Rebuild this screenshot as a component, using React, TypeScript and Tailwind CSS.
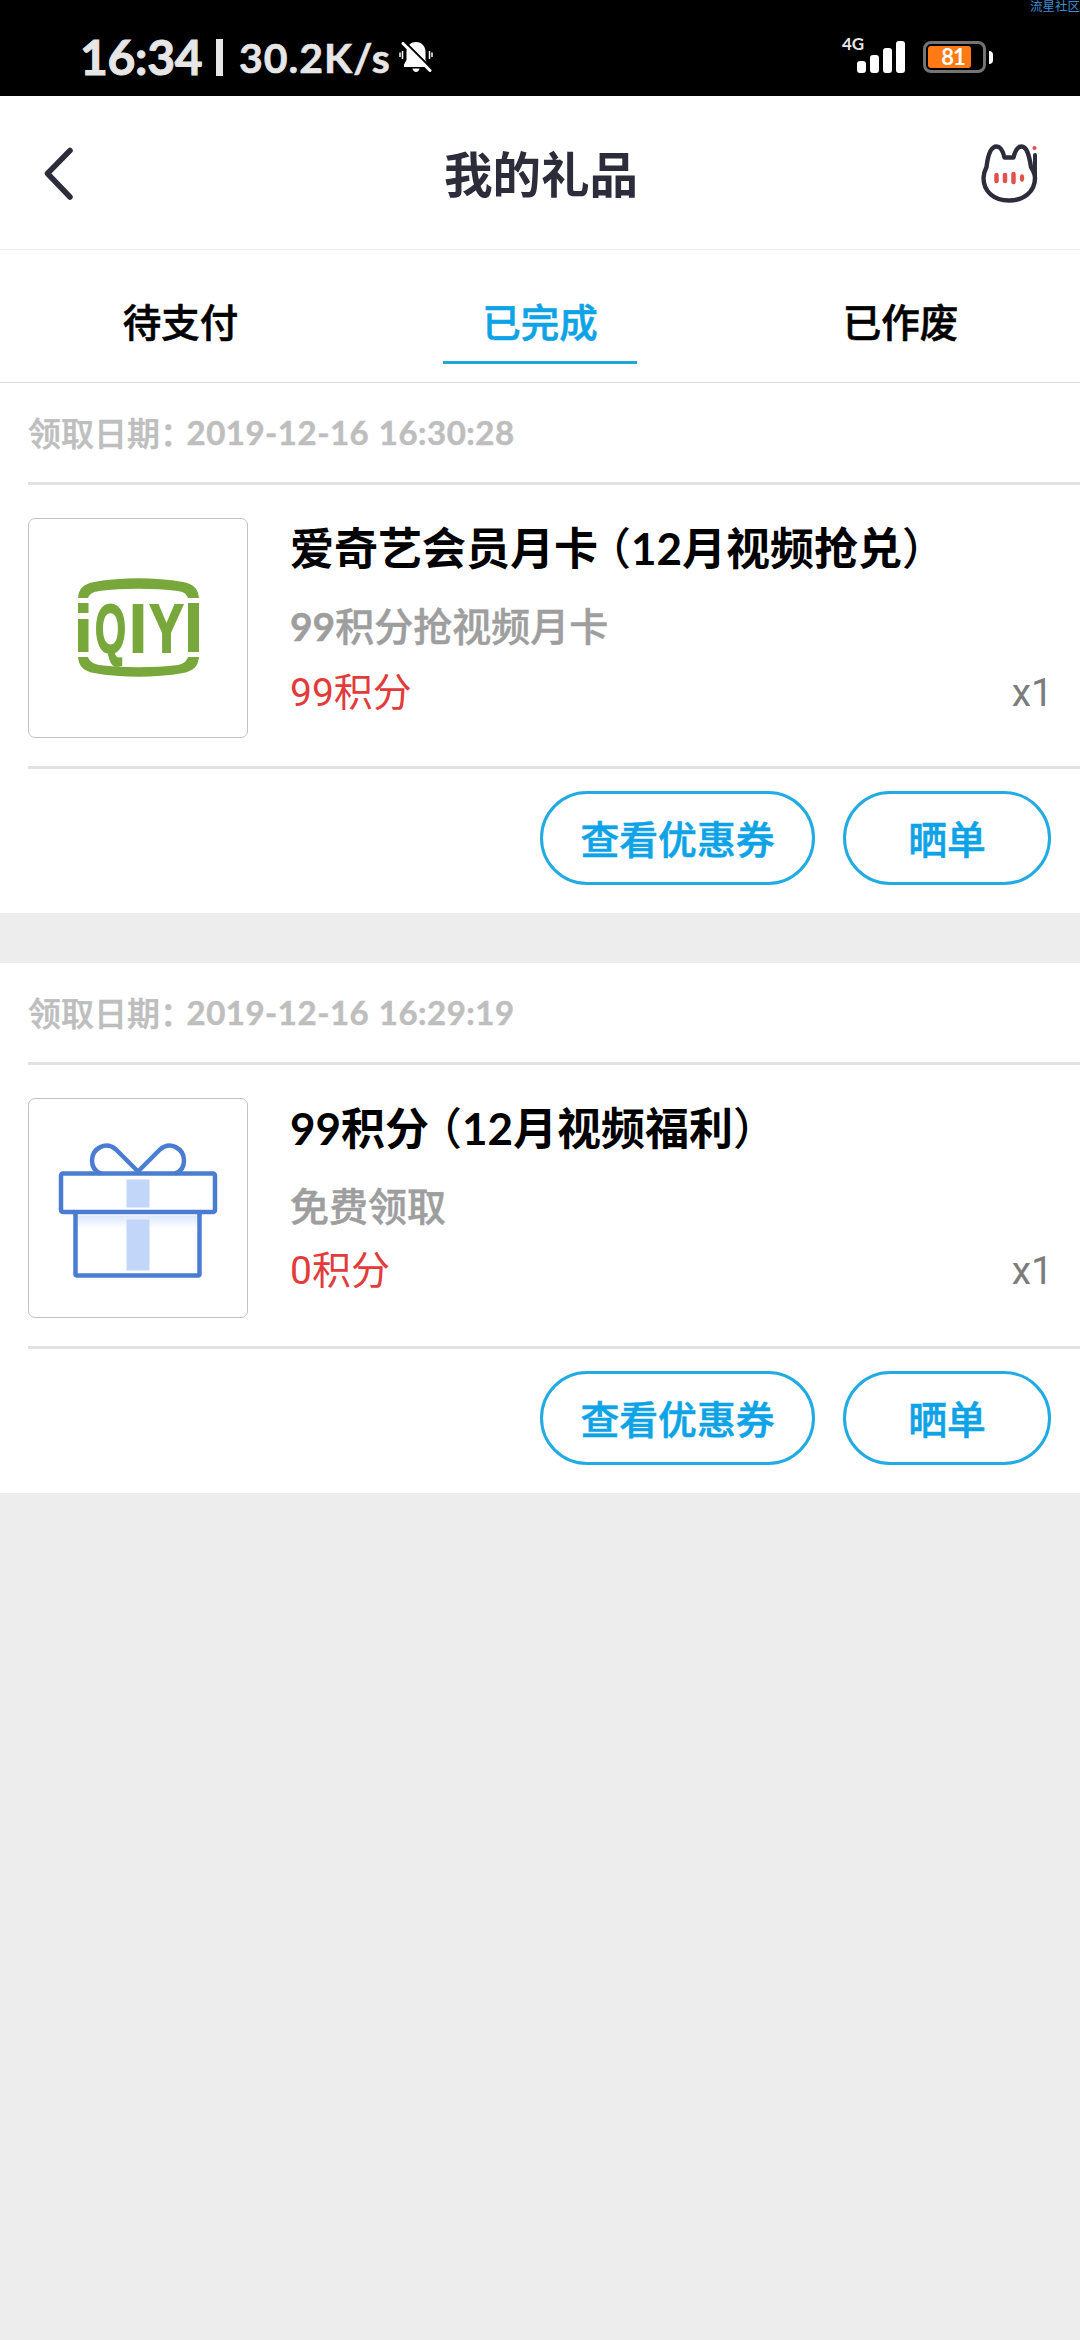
import type { ReactNode } from "react";

interface Gift {
  date: string;
  image: ReactNode;
  title: ReactNode;
  subtitle: ReactNode;
  points: string;
  count: number;
}

function MutedBell() {
  return (
    <svg viewBox="0 0 34 30" className="ml-[9px] h-[30px] w-[34px]">
      <path
        d="M17 0C11 0 7.500 4.500 7.500 10V18L5 22.500V25H28.500V22.500L26.500 18V10C26.500 4.500 23 0 17 0Z"
        fill="#fff"
      />
      <path d="M13.500 26.500H20.500C20 31 14 31 13.500 26.500Z" fill="#fff" />
      <path d="M1 10.500V15M3.500 9V17M30.500 9V17M33 10.500V15" stroke="#fff" strokeWidth="1.500" />
      <path d="M5 -1L33 27" stroke="#000" strokeWidth="2" />
      <path d="M4 1.500L31 28.500" stroke="#fff" strokeWidth="3" strokeLinecap="round" />
    </svg>
  );
}

function StatusBar() {
  return (
    <div className="relative flex h-24 items-start bg-black font-['Lato','Noto_Sans_CJK_SC',sans-serif] font-bold text-[#e6e6e6]">
      <div className="mt-[40px] flex h-[34px] items-center pl-[80px]">
        <span className="w-[122px] text-[48px] leading-none tracking-[-0.3px] [-webkit-text-stroke:1px]">16:34</span>
        <span className="ml-[14px] h-[37px] w-[7px] bg-[#e6e6e6]" />
        <span className="ml-4 w-[151px] text-[41px] leading-none tracking-[1px] whitespace-nowrap [-webkit-text-stroke:0.6px]">
          30.2K/s
        </span>
        <MutedBell />
      </div>
      <span className="mt-[35px] ml-auto w-[24px] text-[17px] leading-[18px]">4G</span>
      <div className="mt-[41px] -ml-[9px] flex h-8 items-end gap-[4px]">
        <i className="h-[12px] w-[9px] rounded-[3px] bg-white" />
        <i className="h-[18px] w-[9px] rounded-[3px] bg-white" />
        <i className="h-[25px] w-[9px] rounded-[3px] bg-white" />
        <i className="h-[32px] w-[9px] rounded-[3px] bg-white" />
      </div>
      <div className="mt-[41px] mr-[87px] ml-[18px] flex items-center gap-[3px]">
        <div className="h-8 w-[63px] rounded-[8px] border-[3px] border-[#747474] p-[2px]">
          <div className="flex h-[22px] w-[43px] items-center justify-center rounded-[3px] bg-[#ff7a14] pl-[7px] text-[22px] leading-none tracking-[-1px] text-white">
            81
          </div>
        </div>
        <i className="h-[13px] w-[4px] rounded-r-full bg-white" />
      </div>
      <span className="absolute top-0 right-0 text-[12.5px] leading-[14px] font-normal text-[#3b8fd2]">
        流星社区
      </span>
    </div>
  );
}

function CatIcon() {
  return (
    <svg viewBox="0 0 60 62" className="h-[62px] w-[60px]" fill="none">
      <path
        d="M7.500 25C9 12 12 4.500 17.500 4.500C22 4.500 24 9 25.500 15.500H34.500C36 9 38.500 4.500 42.500 4.500C47.500 4.500 50 12 52 25C54.500 29 56 32 56 36C56 49.500 45 58.500 30 58.500C15 58.500 4.500 49.500 4.500 36C4.500 32 5.500 29 7.500 25Z"
        stroke="#2c2c3a"
        strokeWidth="4.400"
        strokeLinejoin="round"
      />
      <path d="M56 13V36" stroke="#2c2c3a" strokeWidth="4" strokeLinecap="round" />
      <circle cx="55.500" cy="6" r="2.100" fill="#e0524c" />
      <path d="M17.500 33V39M26 33V39M34.500 32V40" stroke="#e0524c" strokeWidth="4.500" strokeLinecap="round" />
      <ellipse cx="43" cy="36" rx="2.200" ry="3.800" fill="#e0524c" />
    </svg>
  );
}

function Header() {
  return (
    <header className="flex h-[154px] items-center justify-between border-b border-[#eeeeee] bg-white pr-[41px] pl-[43px]">
      <svg viewBox="0 0 32 54" className="h-[54px] w-[60px]" preserveAspectRatio="xMinYMid meet" fill="none">
        <path d="M27 4.500L4.500 27.500L27 51" stroke="#2c2c3a" strokeWidth="5.500" strokeLinecap="round" strokeLinejoin="round" />
      </svg>
      <h1 className="text-[48.5px] leading-none font-bold text-[#2c2c3a]">我的礼品</h1>
      <CatIcon />
    </header>
  );
}

function Tabs() {
  return (
    <nav className="grid h-[133px] grid-cols-3 justify-items-center border-b border-[#dddddd] bg-white text-[38.5px] font-medium text-black [-webkit-text-stroke:0.6px]">
      <span className="h-[115px] pl-[1px] leading-[140px]">待支付</span>
      <span className="h-[114px] w-[194px] border-b-[3px] border-[#1fa5da] text-center leading-[140px] text-[#0ea3e6]">
        已完成
      </span>
      <span className="h-[115px] pl-[1px] leading-[140px]">已作废</span>
    </nav>
  );
}

function IqiyiLogo() {
  return (
    <svg viewBox="0 0 121 100" className="h-[100px] w-[121px] overflow-visible" fill="#78a83c">
      <path d="M0 20C1 10 6 6 16 4C44 -1 77 -1 105 4C115 6 120 10 121 20H110C108 15 105 14 100 13C75 10 46 10 21 13C16 14 12 15 10 20Z" />
      <path d="M0 79C1 89 6 93 16 95C44 100 77 100 105 95C115 93 120 89 121 79H110C108 84 105 86 100 87C75 90 46 90 21 87C16 86 12 84 10 79Z" />
      <rect y="25" width="10.500" height="10" />
      <rect y="41" width="10.500" height="33" />
      <rect x="110" y="25" width="11" height="49" />
      <g
        fontSize="68"
        fontWeight="700"
        fontFamily="'Liberation Sans', sans-serif"
        stroke="#78a83c"
        strokeWidth="2"
      >
        <text x="17" y="73.500" textLength="31" lengthAdjust="spacingAndGlyphs">
          Q
        </text>
        <text x="51.500" y="73.500" textLength="17" lengthAdjust="spacingAndGlyphs">
          I
        </text>
        <text x="71.500" y="73.500" textLength="34" lengthAdjust="spacingAndGlyphs">
          Y
        </text>
      </g>
    </svg>
  );
}

function GiftBox() {
  return (
    <svg viewBox="0 -2.500 160 140" className="h-[140px] w-[160px]" fill="none" stroke="#4a7dd2" strokeWidth="4.500" strokeLinejoin="round">
      <defs>
        <linearGradient id="lid-shade" x1="0" y1="0" x2="0" y2="1">
          <stop offset="0" stopColor="#dbe6fb" />
          <stop offset="1" stopColor="#fff" />
        </linearGradient>
      </defs>
      <path d="M18 75H142V88H18Z" fill="url(#lid-shade)" stroke="none" />
      <path d="M68.500 39H91.500V67H68.500ZM68.500 79H91.500V130H68.500Z" fill="#c2d6fa" stroke="none" />
      <rect x="3" y="33" width="154" height="38.500" rx="2" />
      <path d="M17.500 72V133.500Q17.500 135 19 135H140Q141.500 135 141.500 133.500V72" />
      <path d="M80 31L58 9C48 0 34 8 34 20C34 26 37 31 43 33M80 31L102 9C112 0 126 8 126 20C126 26 123 31 117 33" />
    </svg>
  );
}

function PillButton({ children, className }: { children: ReactNode; className: string }) {
  return (
    <button
      className={`flex h-[94px] items-center justify-center rounded-full border-[3px] border-[#22abe2] pb-[2px] text-[38.8px] font-medium text-[#0ea3e6] [-webkit-text-stroke:0.6px] ${className}`}
    >
      {children}
    </button>
  );
}

function GiftCard({ date, image, title, subtitle, points, count }: Gift) {
  return (
    <article className="h-[530px] bg-white pl-7">
      <p className="flex h-[99px] items-center text-[33px] font-medium text-[#bebebe] [-webkit-text-stroke:0.5px]">
        <span className="[font-feature-settings:'halt']">领取日期：</span>
        <span className="ml-[10px] font-['Lato'] font-bold tracking-[0.5px] [word-spacing:1px]">{date}</span>
      </p>
      <div className="flex h-[287px] border-y-[3px] border-[#e2e2e2] pt-[33px]">
        <div className="flex h-[220px] w-[220px] shrink-0 items-center justify-center rounded-[7px] border border-[#c2c2c2]">
          {image}
        </div>
        <div className="-mt-[3px] ml-[42px] flex-1">
          <h2 className="text-[44px] leading-[62px] font-bold text-black">{title}</h2>
          <p className="mt-[14px] text-[39px] leading-[62px] font-medium text-[#9e9e9e] [-webkit-text-stroke:0.5px]">
            {subtitle}
          </p>
          <div className="mt-[5px] flex justify-between pr-[27px] font-['Roboto','Noto_Sans_CJK_SC',sans-serif] text-[39px] leading-[62px]">
            <span className="text-[#e23b3b]">{points}</span>
            <span className="text-[#7c7c7c]">x{count}</span>
          </div>
        </div>
      </div>
      <div className="flex justify-end gap-7 pt-[22px] pr-[29px]">
        <PillButton className="w-[275px]">查看优惠券</PillButton>
        <PillButton className="w-[208px]">晒单</PillButton>
      </div>
    </article>
  );
}

function Latin({ children }: { children: ReactNode }) {
  return <span className="font-['Lato'] font-bold">{children}</span>;
}

function OpenParen() {
  return <span className="ml-[11px] font-medium [font-feature-settings:'halt']">（</span>;
}

function CloseParen() {
  return <span className="font-medium">）</span>;
}

const gifts: Gift[] = [
  {
    date: "2019-12-16 16:30:28",
    image: <IqiyiLogo />,
    title: (
      <>
        爱奇艺会员月卡
        <OpenParen />
        <Latin>12</Latin>月视频抢兑
        <CloseParen />
      </>
    ),
    subtitle: (
      <>
        <Latin>99</Latin>积分抢视频月卡
      </>
    ),
    points: "99积分",
    count: 1,
  },
  {
    date: "2019-12-16 16:29:19",
    image: <GiftBox />,
    title: (
      <>
        <Latin>99</Latin>积分
        <OpenParen />
        <Latin>12</Latin>月视频福利
        <CloseParen />
      </>
    ),
    subtitle: "免费领取",
    points: "0积分",
    count: 1,
  },
];

export default function App() {
  return (
    <div
      lang="zh-CN"
      className="min-h-[2340px] w-[1080px] overflow-hidden bg-[#ededed] font-['Noto_Sans_CJK_SC',sans-serif]"
    >
      <StatusBar />
      <Header />
      <Tabs />
      <main className="flex flex-col gap-[50px]">
        {gifts.map((gift) => (
          <GiftCard key={gift.date} {...gift} />
        ))}
      </main>
    </div>
  );
}
